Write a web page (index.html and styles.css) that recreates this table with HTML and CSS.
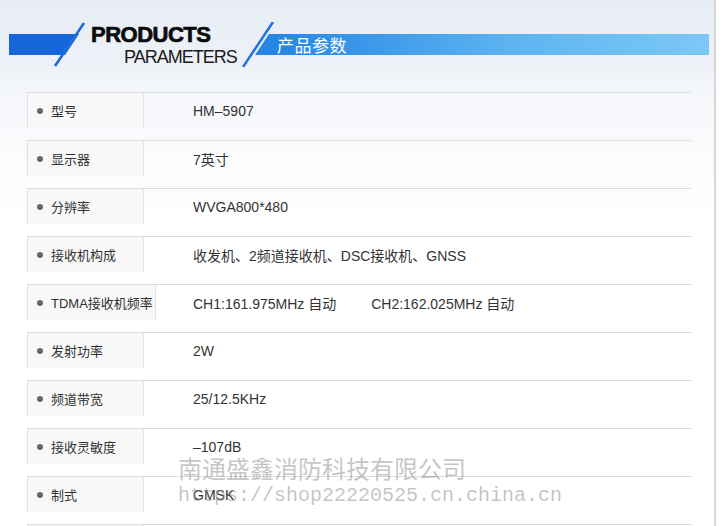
FILE: index.html
```html
<!DOCTYPE html>
<html lang="zh-CN">
<head>
<meta charset="utf-8">
<title>产品参数</title>
<link rel="stylesheet" href="styles.css">
</head>
<body>
<div class="page">
  <header class="hd">
    <svg class="hd-l" width="78" height="45" viewBox="0 0 78 45">
      <polygon points="0,12 70,12 56,33 0,33" fill="#1766d9"/>
      <line x1="75" y1="1" x2="46" y2="44" stroke="#1c6be0" stroke-width="2.6"/>
    </svg>
    <div class="titles">
      <div class="en1">PRODUCTS</div>
      <div class="en2">PARAMETERS</div>
    </div>
    <svg class="hd-m" width="34" height="45" viewBox="0 0 34 45">
      <polygon points="27,12 35,12 35,33 13,33" fill="#2686e6"/>
      <line x1="31" y1="0" x2="1" y2="45" stroke="#1f74e0" stroke-width="2.6"/>
    </svg>
    <div class="title-bar">产品参数</div>
  </header>

  <div class="params">
    <div class="row"><div class="label"><i class="dot"></i>型号</div><div class="value">HM–5907</div></div>
    <div class="row"><div class="label"><i class="dot"></i>显示器</div><div class="value">7英寸</div></div>
    <div class="row"><div class="label"><i class="dot"></i>分辨率</div><div class="value">WVGA800*480</div></div>
    <div class="row"><div class="label"><i class="dot"></i>接收机构成</div><div class="value">收发机、2频道接收机、DSC接收机、GNSS</div></div>
    <div class="row"><div class="label"><i class="dot"></i>TDMA接收机频率</div><div class="value">CH1:161.975MHz 自动<span class="ch2">CH2:162.025MHz 自动</span></div></div>
    <div class="row"><div class="label"><i class="dot"></i>发射功率</div><div class="value">2W</div></div>
    <div class="row"><div class="label"><i class="dot"></i>频道带宽</div><div class="value">25/12.5KHz</div></div>
    <div class="row"><div class="label"><i class="dot"></i>接收灵敏度</div><div class="value">–107dB</div></div>
    <div class="row"><div class="label"><i class="dot"></i>制式</div><div class="value">GMSK</div></div>
    <div class="row"><div class="label"></div><div class="value"></div></div>
  </div>

  <div class="watermark">
    <div class="wm-cn">南通盛鑫消防科技有限公司</div>
    <div class="wm-url">https://shop22220525.cn.china.cn</div>
  </div>
</div>
</body>
</html>
```

FILE: styles.css
```css
html, body {
  margin: 0;
  padding: 0;
  background: #ffffff;
}

.page {
  position: relative;
  width: 714px;
  height: 526px;
  overflow: hidden;
  border-right: 2px solid #d6d6d6;
  background: linear-gradient(180deg, #e7edf5 0px, #edf1f7 60px, #f5f7fb 100px, #fbfcfd 160px, #ffffff 230px);
  font-family: "Liberation Sans", "Noto Sans CJK SC", sans-serif;
  color: #333333;
}

/* ---------- header ---------- */
.hd {
  display: flex;
  align-items: flex-start;
  height: 92px;
  box-sizing: border-box;
  padding-top: 22px;
  padding-left: 9px;
}

.hd-l, .hd-m {
  display: block;
  flex: none;
}

.titles {
  flex: none;
  width: 151px;
  margin-left: 4px;
  padding-top: 2px;
}

.en1 {
  font-family: "Liberation Sans", sans-serif;
  font-weight: 700;
  font-size: 22px;
  line-height: 22px;
  letter-spacing: -0.5px;
  color: #0c0c0c;
  -webkit-text-stroke: 0.7px #0c0c0c;
}

.en2 {
  font-family: "Liberation Sans", sans-serif;
  font-size: 18px;
  line-height: 18px;
  letter-spacing: -1px;
  color: #1a1a1a;
  margin-top: 2px;
  margin-left: 33px;
}

.title-bar {
  flex: none;
  width: 433px;
  height: 21px;
  margin-top: 12px;
  padding-left: 1px;
  box-sizing: border-box;
  background: linear-gradient(90deg, #2686e6 0%, #3f9cea 25%, #5fb4f0 55%, #7cc8f6 100%);
  color: #ffffff;
  font-family: "Noto Sans CJK SC", sans-serif;
  font-size: 17px;
  line-height: 21px;
  letter-spacing: 0.5px;
}

/* ---------- parameter rows ---------- */
.params {
  padding-left: 27px;
}

.row {
  display: grid;
  grid-template-columns: 166px 1fr;
  align-items: start;
  width: 664px;
  height: 48px;
  box-sizing: border-box;
  border-top: 1px solid #dadcdf;
}

.label {
  display: flex;
  align-items: center;
  gap: 8px;
  width: max-content;
  min-width: 117px;
  height: 35px;
  box-sizing: border-box;
  padding: 0 2px 0 9px;
  background: #f8f8f8;
  border-left: 1px solid #e2e2e2;
  border-right: 1px solid #e2e2e2;
  font-family: "Liberation Sans", "Noto Sans CJK SC", sans-serif;
  font-size: 13px;
  color: #333333;
}

.dot {
  display: block;
  width: 6px;
  height: 6px;
  border-radius: 50%;
  background: #666666;
  flex: none;
}

.value {
  display: flex;
  align-items: center;
  height: 35px;
  font-size: 14px;
  color: #333333;
  white-space: nowrap;
}

.ch2 {
  margin-left: 35px;
}

/* ---------- watermark ---------- */
.watermark {
  position: absolute;
  left: 178px;
  top: 456px;
  pointer-events: none;
  color: rgba(140, 140, 140, 0.5);
}

.wm-cn {
  font-family: "Noto Sans CJK SC", sans-serif;
  font-size: 24px;
  line-height: 24px;
  letter-spacing: 0px;
}

.wm-url {
  font-family: "Liberation Mono", monospace;
  font-size: 20px;
  line-height: 20px;
  margin-top: 6px;
}
```
